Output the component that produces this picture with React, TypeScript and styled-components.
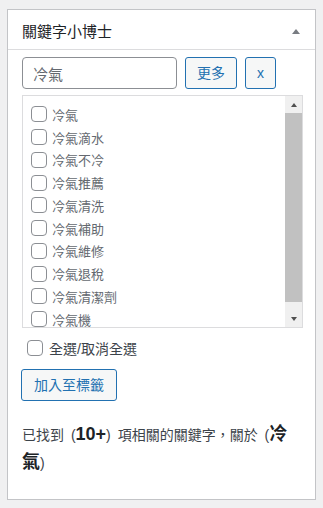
import React from 'react';
import styled, { createGlobalStyle } from 'styled-components';

const KEYWORDS = [
  '冷氣',
  '冷氣滴水',
  '冷氣不冷',
  '冷氣推薦',
  '冷氣清洗',
  '冷氣補助',
  '冷氣維修',
  '冷氣退稅',
  '冷氣清潔劑',
  '冷氣機',
];

const GlobalStyle = createGlobalStyle`
  html, body {
    margin: 0;
    padding: 0;
    background: #f0f0f1;
  }
  body {
    font-family: "Liberation Sans", "Noto Sans CJK TC", sans-serif;
    color: #3c434a;
  }
`;

const Page = styled.div`
  padding: 9px 7px;
`;

const Panel = styled.section`
  box-sizing: border-box;
  width: 309px;
  height: 491px;
  background: #fff;
  border: 1px solid #c3c4c7;
`;

const Header = styled.div`
  box-sizing: border-box;
  height: 40px;
  padding: 4px 15px 0 14px;
  display: flex;
  align-items: center;
  justify-content: space-between;
  border-bottom: 1px solid #dcdcde;
`;

const Title = styled.h2`
  margin: 0;
  font-size: 15px;
  line-height: 15px;
  font-weight: 400;
  color: #1d2327;
`;

const Caret = styled.span<{ down?: boolean }>`
  width: 0;
  height: 0;
  border-left: 4px solid transparent;
  border-right: 4px solid transparent;
  ${({ down }) =>
    down ? 'border-top: 5px solid #787c82;' : 'border-bottom: 5px solid #787c82;'}
`;

const Body = styled.div`
  padding: 7px 12px 0 14px;
`;

const SearchRow = styled.div`
  display: flex;
  gap: 8px;
`;

const SearchInput = styled.input`
  box-sizing: border-box;
  width: 155px;
  height: 32px;
  margin: 0;
  padding: 0 10px;
  border: 1px solid #8c8f94;
  border-radius: 4px;
  font-family: inherit;
  font-size: 15px;
  color: #646970;
  background: #fff;
  outline: none;
`;

const Button = styled.button`
  box-sizing: border-box;
  height: 32px;
  margin: 0;
  padding: 0 11px;
  border: 1px solid #2271b1;
  border-radius: 3px;
  background: #f6f7f7;
  color: #2271b1;
  font-family: inherit;
  font-size: 14px;
  line-height: 30px;
  cursor: pointer;
  white-space: nowrap;
`;

const AddButton = styled(Button)`
  padding: 0 12px;
  margin-left: -1px;
`;

const ListBox = styled.div`
  box-sizing: border-box;
  width: 281px;
  height: 233px;
  margin-top: 6px;
  display: flex;
  border: 1px solid #dcdcde;
  background: #fff;
`;

const Items = styled.div`
  flex: 1;
  overflow: hidden;
  padding: 7px 0 0 8px;
`;

const Row = styled.label<{ size?: number }>`
  display: flex;
  align-items: center;
  gap: 5px;
  height: 22.75px;
  font-size: ${({ size }) => size ?? 13}px;
  color: #646970;
  cursor: pointer;
`;

const Check = styled.input`
  appearance: none;
  box-sizing: border-box;
  flex: none;
  width: 16px;
  height: 16px;
  margin: 0;
  border: 1px solid #8c8f94;
  border-radius: 4px;
  background: #fff;
`;

const Scrollbar = styled.div`
  width: 17px;
  display: flex;
  flex-direction: column;
  background: #f0f0f0;
`;

const ScrollButton = styled.div`
  height: 17px;
  flex: none;
  display: flex;
  align-items: center;
  justify-content: center;
`;

const Arrow = styled.span<{ down?: boolean }>`
  width: 0;
  height: 0;
  border-left: 3.5px solid transparent;
  border-right: 3.5px solid transparent;
  ${({ down }) =>
    down ? 'border-top: 4px solid #505050;' : 'border-bottom: 4px solid #505050;'}
`;

const Thumb = styled.div`
  height: 189px;
  background: #c1c1c1;
`;

const Track = styled.div`
  flex: 1;
`;

const SelectAll = styled(Row)`
  margin-top: 9px;
  padding-left: 5px;
  gap: 6px;
  height: 22px;
  color: #3c434a;
`;

const Actions = styled.div`
  margin-top: 10px;
`;

const Result = styled.p`
  margin: 20px 0 0;
  padding-right: 4px;
  font-size: 14px;
  line-height: 27px;
  word-spacing: 3px;
  color: #3c434a;
`;

const Strong = styled.b<{ size: number }>`
  font-size: ${({ size }) => size}px;
  color: #1d2327;
`;

const App: React.FC = () => {
  return (
    <Page>
      <GlobalStyle />
      <Panel>
        <Header>
          <Title>關鍵字小博士</Title>
          <Caret />
        </Header>
        <Body>
          <SearchRow>
            <SearchInput defaultValue="冷氣" />
            <Button>更多</Button>
            <Button>x</Button>
          </SearchRow>

          <ListBox>
            <Items>
              {KEYWORDS.map((word) => (
                <Row key={word}>
                  <Check type="checkbox" />
                  {word}
                </Row>
              ))}
            </Items>
            <Scrollbar>
              <ScrollButton>
                <Arrow />
              </ScrollButton>
              <Thumb />
              <Track />
              <ScrollButton>
                <Arrow down />
              </ScrollButton>
            </Scrollbar>
          </ListBox>

          <SelectAll size={14}>
            <Check type="checkbox" />
            全選/取消全選
          </SelectAll>

          <Actions>
            <AddButton>加入至標籤</AddButton>
          </Actions>

          <Result>
            已找到 (<Strong size={18}>10+</Strong>) 項相關的關鍵字，關於 (
            <Strong size={18}>冷氣</Strong>)
          </Result>
        </Body>
      </Panel>
    </Page>
  );
};

export default App;
